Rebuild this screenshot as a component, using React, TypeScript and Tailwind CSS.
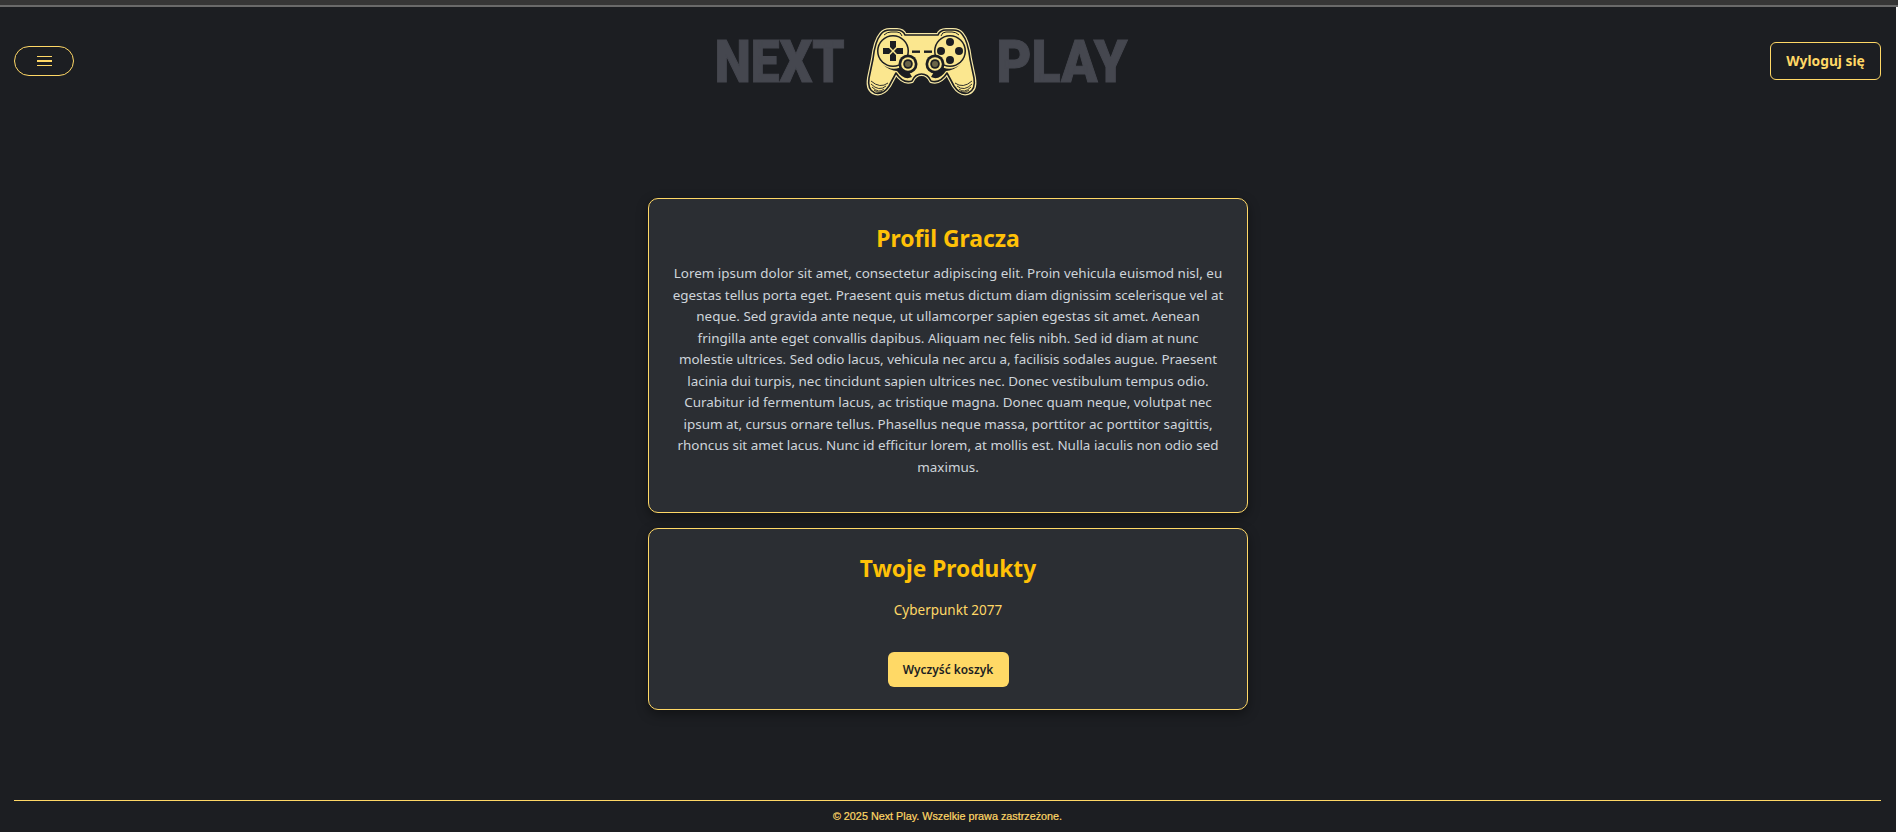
import React from "react";

const paragraph = [
  "Lorem ipsum dolor sit amet, consectetur adipiscing elit. Proin vehicula euismod nisl, eu",
  "egestas tellus porta eget. Praesent quis metus dictum diam dignissim scelerisque vel at",
  "neque. Sed gravida ante neque, ut ullamcorper sapien egestas sit amet. Aenean",
  "fringilla ante eget convallis dapibus. Aliquam nec felis nibh. Sed id diam at nunc",
  "molestie ultrices. Sed odio lacus, vehicula nec arcu a, facilisis sodales augue. Praesent",
  "lacinia dui turpis, nec tincidunt sapien ultrices nec. Donec vestibulum tempus odio.",
  "Curabitur id fermentum lacus, ac tristique magna. Donec quam neque, volutpat nec",
  "ipsum at, cursus ornare tellus. Phasellus neque massa, porttitor ac porttitor sagittis,",
  "rhoncus sit amet lacus. Nunc id efficitur lorem, at mollis est. Nulla iaculis non odio sed",
  "maximus.",
];

const silhouette =
  "M21 13 Q24 9 30 9 L37 9 Q43 9 45 14 L78 14 Q80 9 86 9 L93 9 Q99 9 102 13 Q108 20 110 38 L114 57 Q116 69 108 72 Q100 74 94 65 L87 52 Q80 63 71 60 Q68 53 61.5 53 Q55 53 52 60 Q43 63 36 52 L29 65 Q23 74 15 72 Q7 69 9 57 L13 38 Q15 20 21 13 Z";

const Gamepad: React.FC = () => (
  <svg width="120" height="80" viewBox="0 0 120 80" className="shrink-0">
    <path d={silhouette} fill="#1c1e22" stroke="#f6e8a6" strokeWidth="4" strokeLinejoin="round" />
    <path d={silhouette} fill="#fbe78f" stroke="#1c1e22" strokeWidth="1.6" strokeLinejoin="round" />
    <path d="M24 14 Q27 11 31 11 L37 11 Q41 11 42 15" fill="none" stroke="#1c1e22" strokeWidth="1" />
    <path d="M81 15 Q82 11 86 11 L92 11 Q96 11 99 14" fill="none" stroke="#1c1e22" strokeWidth="1" />
    {/* grip hatching */}
    <g fill="none" stroke="#1c1e22" strokeWidth="0.9">
      <path d="M11 60 Q20 68 28 62" />
      <path d="M11 63 Q19 71 26 65" />
      <path d="M12 66 Q19 73 24 68" />
      <path d="M14 69 Q19 73 22 70" />
      <path d="M112 60 Q103 68 95 62" />
      <path d="M112 63 Q104 71 97 65" />
      <path d="M111 66 Q104 73 99 68" />
      <path d="M109 69 Q104 73 101 70" />
    </g>
    {/* inner shading below the pads */}
    <path d="M22 43 Q33 52 45 44 L52 56 Q44 60 37 50 Q30 50 22 43 Z" fill="#1c1e22" />
    <path d="M101 43 Q90 52 78 44 L71 56 Q79 60 86 50 Q93 50 101 43 Z" fill="#1c1e22" />
    {/* left pad */}
    <circle cx="33" cy="30" r="16" fill="#1c1e22" />
    <circle cx="33" cy="30" r="14.5" fill="#fbe78f" />
    <path
      d="M30 20 H36 V26 L33 29 L30 26 Z M30 40 H36 V34 L33 31 L30 34 Z M23 27 H29 L32 30 L29 33 H23 Z M43 27 H37 L34 30 L37 33 H43 Z"
      fill="#1c1e22"
    />
    {/* right pad */}
    <circle cx="90" cy="30" r="16" fill="#1c1e22" />
    <circle cx="90" cy="30" r="14.5" fill="#fbe78f" />
    <circle cx="90" cy="21" r="4" fill="#1c1e22" />
    <circle cx="90" cy="39" r="4" fill="#1c1e22" />
    <circle cx="81" cy="30" r="4" fill="#1c1e22" />
    <circle cx="99" cy="30" r="4" fill="#1c1e22" />
    {/* centre dashes */}
    <rect x="52" y="29.5" width="8" height="2.4" fill="#1c1e22" />
    <rect x="64" y="29.5" width="8" height="2.4" fill="#1c1e22" />
    {/* sticks */}
    {[48, 75].map((cx) => (
      <g key={cx}>
        <circle cx={cx} cy="43" r="9.5" fill="#1c1e22" />
        <circle cx={cx} cy="43" r="6.8" fill="#fbe78f" />
        <circle cx={cx} cy="43" r="4.8" fill="#1c1e22" />
        <circle cx={cx} cy="43" r="3" fill="#fbe78f" opacity="0.35" />
      </g>
    ))}
  </svg>
);

const LogoWord: React.FC<{ children: React.ReactNode; className: string }> = ({ children, className }) => (
  <span
    className={`block font-['Roboto',sans-serif] font-black text-[59px] leading-none text-[#45474f] origin-center [-webkit-text-stroke:1px_#45474f] ${className}`}
  >
    {children}
  </span>
);

export default function App() {
  return (
    <div className="flex min-h-[832px] bg-white">
      <div className="w-[1896px] flex flex-col bg-[#1c1e22] font-['Noto_Sans',sans-serif]">
        <div className="h-[5px] w-[1898px] bg-[#363636]" />
        <div className="h-[2px] w-[1898px] bg-[#6a6a6a]" />

        <header className="flex items-center justify-between pl-[14px] pr-[15px] h-[108px]">
          <button className="w-[60px] h-[30px] rounded-[15px] border border-[#ffd866] flex flex-col items-center justify-center gap-[3px]">
            <span className="block w-[15px] h-px bg-[#ffd866]" />
            <span className="block w-[15px] h-[2px] bg-[#ffd866]" />
            <span className="block w-[15px] h-px bg-[#ffd866]" />
          </button>

          <div className="flex items-center">
            <div className="w-[160px] flex justify-center">
              <LogoWord className="scale-x-[0.87]">NEXT</LogoWord>
            </div>
            <Gamepad />
            <div className="w-[164px] flex justify-center">
              <LogoWord className="scale-x-[0.91]">PLAY</LogoWord>
            </div>
          </div>

          <button className="w-[111px] h-[38px] rounded-[6px] border border-[#ffd866] text-[#ffd866] text-[13.8px] font-bold">
            Wyloguj się
          </button>
        </header>

        <main className="flex flex-col items-center gap-[15px] pt-[83px]">
          <section className="w-[600px] h-[315px] rounded-[10px] border border-[#ffd866] bg-[#2b2e33] shadow-[0_4px_12px_rgba(0,0,0,0.4)] pt-[24px] px-[20px] text-center">
            <h2 className="text-[#ffc107] text-[22.9px] font-bold leading-[32px] mb-[8px]">Profil Gracza</h2>
            <p className="text-[#ced4da] text-[13.45px] leading-[21.5px] whitespace-nowrap">
              {paragraph.map((line, i) => (
                <React.Fragment key={i}>
                  {line}
                  <br />
                </React.Fragment>
              ))}
            </p>
          </section>

          <section className="w-[600px] h-[182px] rounded-[10px] border border-[#ffd866] bg-[#2b2e33] shadow-[0_4px_12px_rgba(0,0,0,0.4)] pt-[24px] text-center">
            <h2 className="text-[#ffc107] text-[22.7px] font-bold leading-[32px]">Twoje Produkty</h2>
            <p className="text-[#ffd866] text-[13.5px] leading-[22px] mt-[14px]">Cyberpunkt 2077</p>
            <button className="mt-[31px] w-[121px] h-[35px] rounded-[6px] bg-[#ffd966] text-[#1c1e22] text-[11.9px] font-semibold">
              Wyczyść koszyk
            </button>
          </section>
        </main>

        <footer className="mt-auto ml-[14px] mr-[15px] border-t border-[#ffd866] h-[32px] flex items-center justify-center">
          <span className="font-['Liberation_Sans',sans-serif] text-[10.8px] text-[#ffd866] [-webkit-text-stroke:0.2px_#ffd866]">
            © 2025 Next Play. Wszelkie prawa zastrzeżone.
          </span>
        </footer>
      </div>
      <div className="w-[2px]" />
    </div>
  );
}
